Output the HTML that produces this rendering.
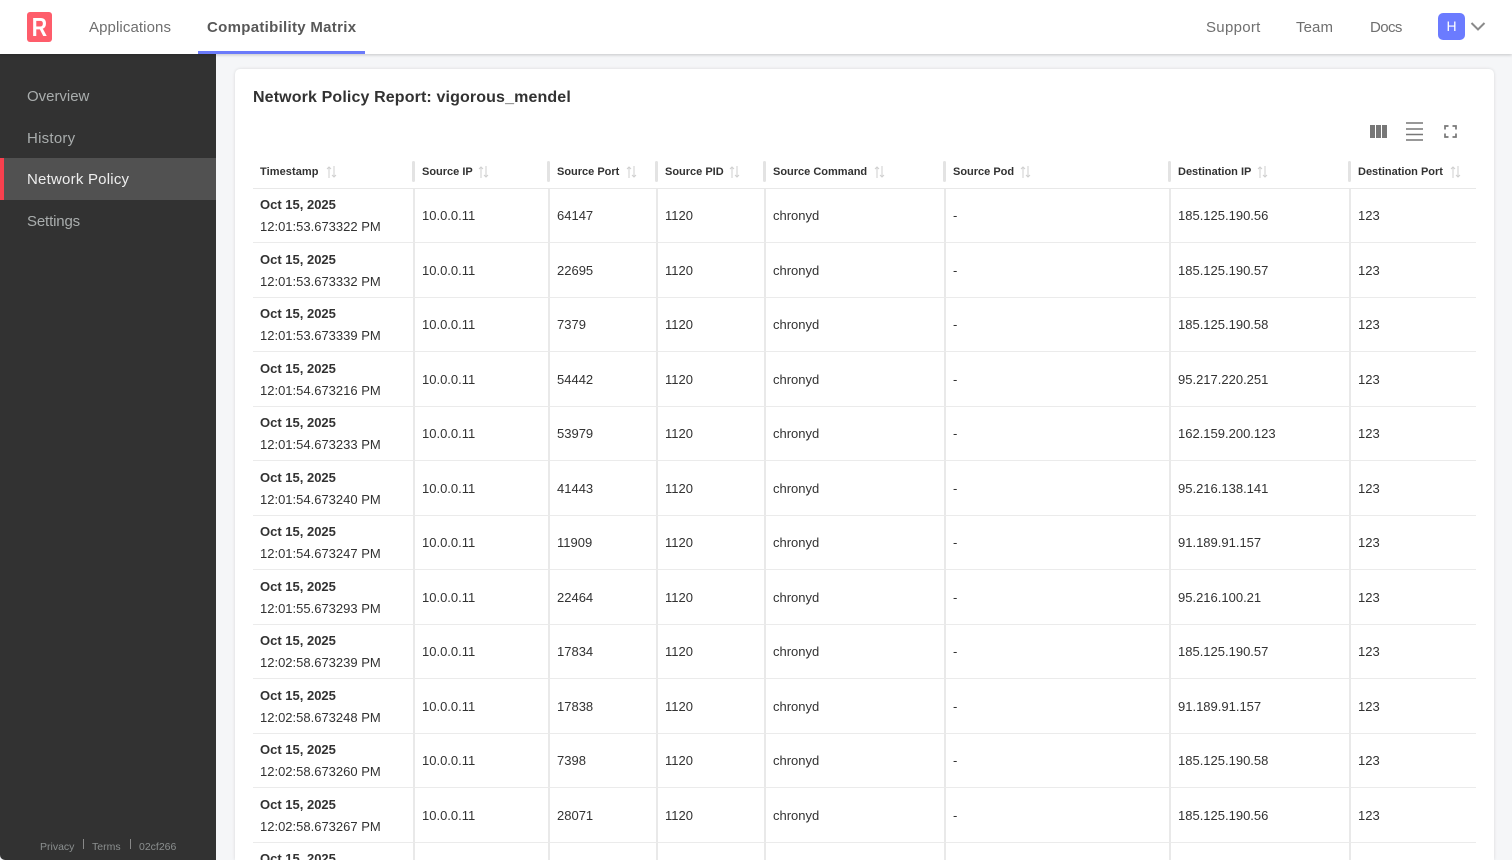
<!DOCTYPE html>
<html><head><meta charset="utf-8"><title>Network Policy Report</title>
<style>
*{box-sizing:border-box}
html,body{margin:0;width:1512px;height:860px;overflow:hidden;background:#f5f6f8;font-family:"Liberation Sans",sans-serif;color:#323232}
body{position:relative}
.top{position:absolute;left:0;top:0;width:1512px;height:54px;background:#fff;box-shadow:0 1px 3px rgba(0,0,0,.2);z-index:3}
.logo{position:absolute;left:27px;top:12px;width:25px;height:30px;background:#fe5d6b;border-radius:3px;color:#fff;font-weight:bold;font-size:26px;line-height:30px;text-align:center}
.logo span{display:inline-block;transform:scaleX(.82)}
.n{position:absolute;top:18px;font-size:15px;line-height:20px;color:#6f6f6f;white-space:nowrap}
.n.a{font-weight:bold;color:#585858;left:207px;letter-spacing:.3px}
.ul{position:absolute;left:198px;top:51px;width:167px;height:3px;background:#6b7bfa}
.av{position:absolute;left:1438px;top:13px;width:27px;height:27px;border-radius:5px;background:#6b7bff;color:#fff;font-size:14px;line-height:27px;text-align:center}
.side{position:absolute;left:0;top:54px;width:216px;height:806px;background:#323232;border-bottom-left-radius:5px}
.s{position:absolute;left:0;width:216px;height:42px;line-height:44px;padding-left:27px;font-size:15px;color:#a9adad}
.s.a{background:#515151;color:#eee;border-left:4px solid #f7404e;padding-left:23px}
.ft{position:absolute;top:786px;font-size:10.5px;line-height:14px;color:#8b8f8f}
.sep{position:absolute;top:785px;width:1px;height:10px;background:#888}
.card{position:absolute;left:235px;top:69px;width:1259px;height:791px;background:#fff;border-radius:5px 5px 0 0;box-shadow:0 0 3px rgba(0,0,0,.12);overflow:hidden}
h1{position:absolute;left:18px;top:18px;margin:0;font-size:16px;line-height:21px;font-weight:bold;color:#323232;letter-spacing:.13px;white-space:nowrap}
svg{position:absolute}
table{position:absolute;left:18px;top:91px;width:1223px;border-collapse:separate;border-spacing:0;table-layout:fixed;font-size:13px}
th{height:28.5px;padding:0 0 3px 9px;text-align:left;font-size:11px;font-weight:bold;color:#323232;border-bottom:1px solid #e8e8e8;position:relative;white-space:nowrap}
th:first-child,td:first-child{padding-left:7px}
th+th:before{content:"";position:absolute;left:-1px;top:1px;width:3px;height:21px;background:#e3e3e3;border-radius:1.5px}
th svg{top:6px}
td{height:54.5px;padding:2px 0 0 8px;border-bottom:1px solid #ebebeb;color:#323232;line-height:22px;white-space:nowrap;overflow:hidden}
td+td{border-left:2px solid #e9e9e9;padding-left:7px}
td b{display:block;font-weight:bold;color:#323232}
</style></head><body>
<div class="top">
<div class="logo"><span>R</span></div>
<div class="n" style="left:89px;letter-spacing:.1px">Applications</div>
<div class="n a">Compatibility Matrix</div>
<div class="ul"></div>
<div class="n" style="left:1206px;letter-spacing:.3px">Support</div>
<div class="n" style="left:1296px;letter-spacing:.1px">Team</div>
<div class="n" style="left:1370px;letter-spacing:-.6px">Docs</div>
<div class="av">H</div>
<svg style="left:1470px;top:21px" width="16" height="12" viewBox="0 0 16 12"><path d="M1.5 2 L8 8.500 L14.500 2" fill="none" stroke="#8a8a8a" stroke-width="2"/></svg>
</div>
<div class="side">
<div class="s" style="top:21px;letter-spacing:-.02px">Overview</div>
<div class="s" style="top:63px;letter-spacing:.25px">History</div>
<div class="s a" style="top:104px;letter-spacing:.22px">Network Policy</div>
<div class="s" style="top:146px;letter-spacing:-.15px">Settings</div>
<div class="ft" style="left:40px">Privacy</div><div class="sep" style="left:83px"></div>
<div class="ft" style="left:92px">Terms</div><div class="sep" style="left:130px"></div>
<div class="ft" style="left:139px">02cf266</div>
</div>
<div class="card">
<h1>Network Policy Report: vigorous_mendel</h1>
<svg style="left:1135px;top:56px" width="17" height="13" viewBox="0 0 17 13"><path d="M0 0h5v13H0zM6 0h5v13H6zM12 0h5v13h-5z" fill="#777"/></svg>
<svg style="left:1171px;top:53px" width="17" height="19" viewBox="0 0 17 19"><path d="M0 1h17M0 7h17M0 12.500h17M0 18h17" stroke="#777" stroke-width="1.600" fill="none"/></svg>
<svg style="left:1209px;top:56px" width="13" height="13" viewBox="0 0 13 13"><path d="M1 4.500V1h3.500M8.500 1H12v3.500M12 8.500V12H8.500M4.500 12H1V8.500" stroke="#777" stroke-width="1.700" fill="none"/></svg>
<table>
<colgroup><col style="width:160px"><col style="width:135px"><col style="width:108px"><col style="width:108px"><col style="width:180px"><col style="width:225px"><col style="width:180px"><col></colgroup>
<thead><tr>
<th style="letter-spacing:.08px">Timestamp<svg style="left:73px" width="11" height="12" viewBox="0 0 11 12"><path d="M3 12V1M1 3l2-2 2 2M8 0v11M6 9l2 2 2-2" fill="none" stroke="#cfcfcf"/></svg></th>
<th>Source IP<svg style="left:65px" width="11" height="12" viewBox="0 0 11 12"><path d="M3 12V1M1 3l2-2 2 2M8 0v11M6 9l2 2 2-2" fill="none" stroke="#cfcfcf"/></svg></th>
<th>Source Port<svg style="left:78px" width="11" height="12" viewBox="0 0 11 12"><path d="M3 12V1M1 3l2-2 2 2M8 0v11M6 9l2 2 2-2" fill="none" stroke="#cfcfcf"/></svg></th>
<th>Source PID<svg style="left:73px" width="11" height="12" viewBox="0 0 11 12"><path d="M3 12V1M1 3l2-2 2 2M8 0v11M6 9l2 2 2-2" fill="none" stroke="#cfcfcf"/></svg></th>
<th>Source Command<svg style="left:110px" width="11" height="12" viewBox="0 0 11 12"><path d="M3 12V1M1 3l2-2 2 2M8 0v11M6 9l2 2 2-2" fill="none" stroke="#cfcfcf"/></svg></th>
<th>Source Pod<svg style="left:76px" width="11" height="12" viewBox="0 0 11 12"><path d="M3 12V1M1 3l2-2 2 2M8 0v11M6 9l2 2 2-2" fill="none" stroke="#cfcfcf"/></svg></th>
<th>Destination IP<svg style="left:88px" width="11" height="12" viewBox="0 0 11 12"><path d="M3 12V1M1 3l2-2 2 2M8 0v11M6 9l2 2 2-2" fill="none" stroke="#cfcfcf"/></svg></th>
<th>Destination Port<svg style="left:101px" width="11" height="12" viewBox="0 0 11 12"><path d="M3 12V1M1 3l2-2 2 2M8 0v11M6 9l2 2 2-2" fill="none" stroke="#cfcfcf"/></svg></th>
</tr></thead>
<tbody>
<tr><td><b>Oct 15, 2025</b>12:01:53.673322 PM</td><td>10.0.0.11</td><td>64147</td><td>1120</td><td>chronyd</td><td>-</td><td>185.125.190.56</td><td>123</td></tr>
<tr><td><b>Oct 15, 2025</b>12:01:53.673332 PM</td><td>10.0.0.11</td><td>22695</td><td>1120</td><td>chronyd</td><td>-</td><td>185.125.190.57</td><td>123</td></tr>
<tr><td><b>Oct 15, 2025</b>12:01:53.673339 PM</td><td>10.0.0.11</td><td>7379</td><td>1120</td><td>chronyd</td><td>-</td><td>185.125.190.58</td><td>123</td></tr>
<tr><td><b>Oct 15, 2025</b>12:01:54.673216 PM</td><td>10.0.0.11</td><td>54442</td><td>1120</td><td>chronyd</td><td>-</td><td>95.217.220.251</td><td>123</td></tr>
<tr><td><b>Oct 15, 2025</b>12:01:54.673233 PM</td><td>10.0.0.11</td><td>53979</td><td>1120</td><td>chronyd</td><td>-</td><td>162.159.200.123</td><td>123</td></tr>
<tr><td><b>Oct 15, 2025</b>12:01:54.673240 PM</td><td>10.0.0.11</td><td>41443</td><td>1120</td><td>chronyd</td><td>-</td><td>95.216.138.141</td><td>123</td></tr>
<tr><td><b>Oct 15, 2025</b>12:01:54.673247 PM</td><td>10.0.0.11</td><td>11909</td><td>1120</td><td>chronyd</td><td>-</td><td>91.189.91.157</td><td>123</td></tr>
<tr><td><b>Oct 15, 2025</b>12:01:55.673293 PM</td><td>10.0.0.11</td><td>22464</td><td>1120</td><td>chronyd</td><td>-</td><td>95.216.100.21</td><td>123</td></tr>
<tr><td><b>Oct 15, 2025</b>12:02:58.673239 PM</td><td>10.0.0.11</td><td>17834</td><td>1120</td><td>chronyd</td><td>-</td><td>185.125.190.57</td><td>123</td></tr>
<tr><td><b>Oct 15, 2025</b>12:02:58.673248 PM</td><td>10.0.0.11</td><td>17838</td><td>1120</td><td>chronyd</td><td>-</td><td>91.189.91.157</td><td>123</td></tr>
<tr><td><b>Oct 15, 2025</b>12:02:58.673260 PM</td><td>10.0.0.11</td><td>7398</td><td>1120</td><td>chronyd</td><td>-</td><td>185.125.190.58</td><td>123</td></tr>
<tr><td><b>Oct 15, 2025</b>12:02:58.673267 PM</td><td>10.0.0.11</td><td>28071</td><td>1120</td><td>chronyd</td><td>-</td><td>185.125.190.56</td><td>123</td></tr>
<tr><td><b>Oct 15, 2025</b>12:02:58.673270 PM</td><td>10.0.0.11</td><td>30112</td><td>1120</td><td>chronyd</td><td>-</td><td>185.125.190.57</td><td>123</td></tr>
</tbody></table>
</div>
</body></html>
